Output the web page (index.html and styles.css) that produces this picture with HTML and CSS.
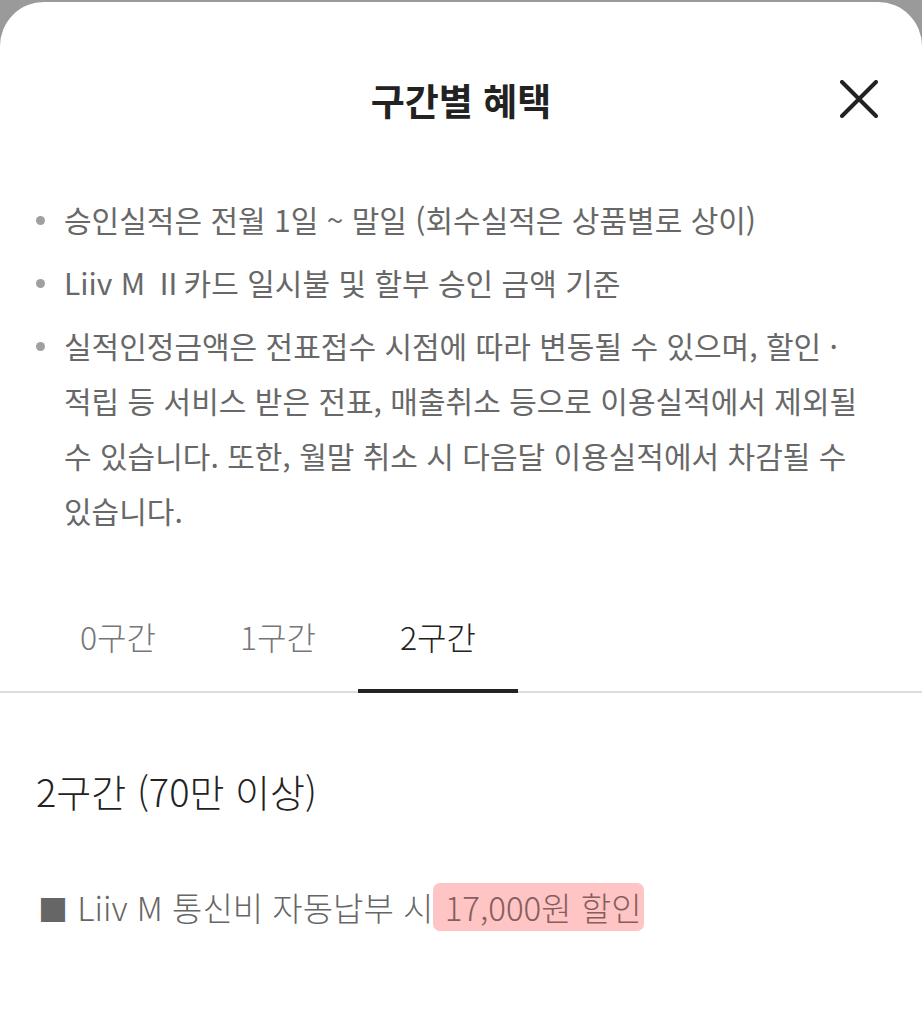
FILE: index.html
```html
<!DOCTYPE html>
<html lang="ko">
<head>
<meta charset="utf-8">
<title>구간별 혜택</title>
<link rel="stylesheet" href="styles.css">
</head>
<body>
<div class="sheet">
  <header class="sheet-header">
    <h1 class="sheet-title">구간별 혜택</h1>
    <button class="close-btn" aria-label="닫기">
      <svg width="38" height="38" viewBox="0 0 38 38"><path d="M2 2 L36 36 M36 2 L2 36" stroke="#222" stroke-width="4" stroke-linecap="round" fill="none"/></svg>
    </button>
  </header>
  <ul class="notice-list">
    <li>승인실적은 전월 1일 ~ 말일 (회수실적은 상품별로 상이)</li>
    <li>Liiv M Ⅱ카드 일시불 및 할부 승인 금액 기준</li>
    <li>실적인정금액은 전표접수 시점에 따라 변동될 수 있으며, 할인 · 적립 등 서비스 받은 전표, 매출취소 등으로 이용실적에서 제외될 수 있습니다. 또한, 월말 취소 시 다음달 이용실적에서 차감될 수 있습니다.</li>
  </ul>
  <nav class="tabs">
    <div class="tab">0구간</div>
    <div class="tab">1구간</div>
    <div class="tab active">2구간</div>
  </nav>
  <section class="tier">
    <h2 class="tier-title">2구간 (70만 이상)</h2>
    <p class="tier-benefit"><span class="sq">■</span> Liiv M 통신비 자동납부 시<span class="hl"> 17,000원 할인</span></p>
  </section>
</div>
</body>
</html>
```
FILE: styles.css
```css
html, body {
  margin: 0;
  padding: 0;
}
body {
  background: #9a9a9a;
  font-family: "Noto Sans CJK KR", "Noto Sans", sans-serif;
  padding-top: 2px;
}
.sheet {
  background: #fff;
  border-radius: 44px 44px 0 0;
  min-height: 1022px;
  overflow: hidden;
}
.sheet-header {
  display: grid;
  grid-template-columns: 1fr auto 1fr;
  align-items: center;
  padding-top: 70px;
  height: 56px;
}
.sheet-title {
  grid-column: 2;
  margin: 0;
  font-size: 37px;
  line-height: 56px;
  font-weight: 700;
  color: #222;
}
.close-btn {
  grid-column: 3;
  justify-self: end;
  margin-right: 44px;
  margin-top: -2px;
  padding: 0;
  border: 0;
  background: none;
  width: 38px;
  height: 38px;
  display: block;
}
.close-btn svg { display: block; }
.notice-list {
  list-style: none;
  margin: 64px 0 0;
  padding: 0 50px 0 64px;
}
.notice-list li {
  position: relative;
  font-size: 30px;
  line-height: 55px;
  color: #686868;
  margin-bottom: 8px;
  word-break: keep-all;
}
.notice-list li::before {
  content: "";
  position: absolute;
  left: -28px;
  top: 24px;
  width: 9px;
  height: 9px;
  border-radius: 50%;
  background: #a0a0a0;
}
.tabs {
  display: flex;
  margin-top: 40px;
  padding-left: 38px;
  border-bottom: 2px solid #ddd;
}
.tab {
  width: 160px;
  text-align: center;
  font-size: 32px;
  font-weight: 300;
  line-height: 44px;
  padding: 36px 0 33px;
  color: #777;
}
.tab.active {
  color: #222;
  padding-bottom: 31px;
  border-bottom: 4px solid #222;
  margin-bottom: -2px;
}
.tier {
  padding: 0 36px;
}
.tier-title {
  margin: 74px 0 0;
  font-size: 38px;
  font-weight: 300;
  line-height: 48px;
  color: #222;
}
.tier-benefit {
  margin: 68px 0 0 2px;
  font-size: 33px;
  font-weight: 300;
  line-height: 48px;
  color: #666;
}
.sq {
  font-size: 30px;
}
.hl {
  background: #ffc4c4;
  color: #855e5e;
  border-radius: 7px;
  padding: 0 2px;
}
```
